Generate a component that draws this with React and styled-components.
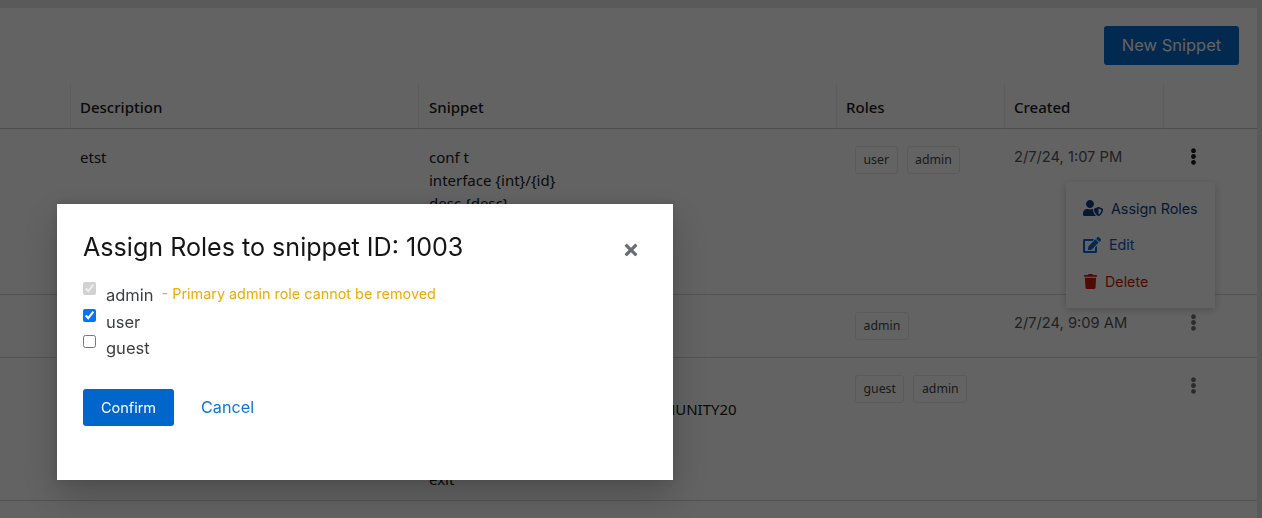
import React from "react";
import styled, { createGlobalStyle } from "styled-components";
import {
  FaEdit,
  FaEllipsisV,
  FaTimes,
  FaTrash,
  FaUserShield,
} from "react-icons/fa";

const snippets = [
  {
    id: 1003,
    description: "etst",
    snippet: ["conf t", "interface {int}/{id}", "desc {desc}", "no shut", "end", "wr"],
    roles: ["user", "admin"],
    created: "2/7/24, 1:07 PM",
    open: true,
  },
  {
    id: 1002,
    description: "show version",
    snippet: ["show version"],
    roles: ["admin"],
    created: "2/7/24, 9:09 AM",
  },
  {
    id: 1001,
    description: "snmp",
    snippet: [
      "conf t",
      "snmp-server community rw COMMUNITY20",
      "no shut",
      "end",
      "exit",
    ],
    roles: ["guest", "admin"],
    created: "",
  },
  {
    id: 1000,
    description: "test",
    snippet: ["conf t"],
    roles: ["guest", "admin"],
    created: "",
  },
];

const roleOptions = [
  { name: "admin", checked: true, disabled: true },
  { name: "user", checked: true },
  { name: "guest", checked: false },
];

const App = () => {
  return (
    <>
      <GlobalStyle />
      <Page>
        <Card>
          <Toolbar>
            <NewButton>New Snippet</NewButton>
          </Toolbar>
          <Table>
            <colgroup>
              <col width="70" />
              <col width="348" />
              <col width="418" />
              <col width="168" />
              <col width="159" />
              <col width="94" />
            </colgroup>
            <thead>
              <tr>
                <Th></Th>
                <Th>Description</Th>
                <SnippetHead>Snippet</SnippetHead>
                <Th>Roles</Th>
                <Th>Created</Th>
                <Th></Th>
              </tr>
            </thead>
            <tbody>
              {snippets.map((item) => {
                return (
                  <tr key={item.id}>
                    <Td></Td>
                    <Td>{item.description}</Td>
                    <SnippetCell>
                      {item.snippet.map((line) => (
                        <div key={line}>{line}</div>
                      ))}
                    </SnippetCell>
                    <RolesCell>
                      <Tags>
                        {item.roles.map((role) => (
                          <Tag key={role}>{role}</Tag>
                        ))}
                      </Tags>
                    </RolesCell>
                    <CreatedCell>{item.created}</CreatedCell>
                    <ActionCell>
                      <Kebab $open={item.open}>
                        <FaEllipsisV />
                      </Kebab>
                      {item.open && (
                        <Menu>
                          <MenuItem $color="#0b3d80">
                            <FaUserShield size={20} />
                            <MenuLabel $gap={8} $color="#0b3d80">
                              Assign Roles
                            </MenuLabel>
                          </MenuItem>
                          <MenuItem $color="#0066cc">
                            <FaEdit size={18} />
                            <MenuLabel $gap={8} $color="#1450b0">
                              Edit
                            </MenuLabel>
                          </MenuItem>
                          <MenuItem $color="#c9190b">
                            <FaTrash size={15} />
                            <MenuLabel $gap={7} $color="#c9190b">
                              Delete
                            </MenuLabel>
                          </MenuItem>
                        </Menu>
                      )}
                    </ActionCell>
                  </tr>
                );
              })}
            </tbody>
          </Table>
        </Card>
      </Page>
      <Backdrop>
        <Modal>
          <ModalHeader>
            <ModalTitle>Assign Roles to snippet ID: 1003</ModalTitle>
            <CloseButton>
              <FaTimes />
            </CloseButton>
          </ModalHeader>
          <RoleList>
            {roleOptions.map((role) => (
              <RoleRow key={role.name}>
                <RoleCheck
                  type="checkbox"
                  defaultChecked={role.checked}
                  disabled={role.disabled}
                />
                <RoleName>{role.name}</RoleName>
                {role.disabled && (
                  <RoleNote>- Primary admin role cannot be removed</RoleNote>
                )}
              </RoleRow>
            ))}
          </RoleList>
          <ModalFooter>
            <ConfirmButton>Confirm</ConfirmButton>
            <CancelButton>Cancel</CancelButton>
          </ModalFooter>
        </Modal>
      </Backdrop>
    </>
  );
};

const GlobalStyle = createGlobalStyle`
  html, body {
    margin: 0;
    height: 100%;
    overflow: hidden;
    background: #e8e8e8;
    font-family: "Inter", "Liberation Sans", sans-serif;
  }
`;

const Page = styled.div`
  height: 100vh;
  box-sizing: border-box;
  padding-top: 8px;
  overflow: hidden;
  background: #e8e8e8;
`;

const Card = styled.div`
  width: 1257px;
  height: 100%;
  background: #fff;
  border-right: 1px solid #e4e4e4;
`;

const Toolbar = styled.div`
  display: flex;
  justify-content: flex-end;
  padding: 18px 18px 18px 0;
`;

const NewButton = styled.button`
  width: 135px;
  height: 39px;
  padding: 0 0 2px;
  border: none;
  border-radius: 3px;
  background: #0066cc;
  color: #fff;
  font-family: inherit;
  font-size: 16.5px;
`;

const Table = styled.table`
  width: 1257px;
  table-layout: fixed;
  border-collapse: separate;
  border-spacing: 0;
  font-family: "Noto Sans", sans-serif;
  font-size: 15px;
  color: #151515;
`;

const Th = styled.th`
  height: 43px;
  box-sizing: content-box;
  padding: 2px 0 0 9px;
  border-bottom: 1px solid #c8c8c8;
  border-left: 1px solid #eee;
  font-weight: 500;
  text-align: left;
  &:first-child {
    border-left: none;
  }
`;

const SnippetHead = styled(Th)`
  padding-left: 10px;
`;

const Td = styled.td`
  padding: 17px 10px 9px;
  border-bottom: 1px solid #d2d2d2;
  vertical-align: top;
  line-height: 23.2px;
`;

const SnippetCell = styled(Td)`
  padding-left: 11px;
  white-space: nowrap;
`;

const RolesCell = styled(Td)`
  padding-left: 19px;
`;

const CreatedCell = styled(Td)`
  color: #4f5255;
  font-family: "Inter", sans-serif;
  font-size: 14.7px;
`;

const ActionCell = styled(Td)`
  position: relative;
  padding: 19px 0 9px 22px;
`;

const Tags = styled.div`
  display: flex;
  gap: 9px;
  margin-bottom: 8px;
`;

const Tag = styled.span`
  height: 26px;
  padding: 0 7.5px;
  display: flex;
  align-items: center;
  border: 1px solid #e6e6e6;
  border-radius: 3px;
  font-size: 12.3px;
  line-height: 1;
  color: #3c3f42;
`;

const Kebab = styled.div`
  display: flex;
  font-size: 17px;
  color: ${(props) => (props.$open ? "#151515" : "#6a6e73")};
  svg {
    display: block;
  }
`;

const Menu = styled.div`
  position: absolute;
  z-index: 2;
  top: 53px;
  right: 42px;
  box-sizing: border-box;
  width: 149px;
  height: 126px;
  padding: 8px 0 0 17px;
  display: flex;
  flex-direction: column;
  background: #fff;
  box-shadow: 0 2px 8px rgba(3, 3, 3, 0.2);
`;

const MenuItem = styled.div`
  height: 36.5px;
  display: flex;
  align-items: center;
  color: ${(props) => props.$color};
`;

const MenuLabel = styled.span`
  margin-left: ${(props) => props.$gap}px;
  color: ${(props) => props.$color};
  font-family: "Inter", sans-serif;
  font-size: 14.3px;
`;

const Backdrop = styled.div`
  position: fixed;
  inset: 0;
  z-index: 10;
  padding: 204px 0 0 57px;
  background: rgba(3, 3, 3, 0.62);
`;

const Modal = styled.div`
  width: 616px;
  height: 276px;
  box-sizing: border-box;
  padding: 26px 33px 0 26px;
  background: #fff;
  box-shadow: 0 16px 32px rgba(3, 3, 3, 0.2), 0 0 8px rgba(3, 3, 3, 0.1);
`;

const ModalHeader = styled.div`
  display: flex;
  justify-content: space-between;
  align-items: center;
`;

const ModalTitle = styled.h1`
  margin: 0;
  font-size: 25.1px;
  font-weight: 400;
  line-height: 34px;
  color: #151515;
`;

const CloseButton = styled.div`
  display: flex;
  margin-top: 6px;
  font-size: 18px;
  color: #6a6e73;
`;

const RoleList = styled.div`
  margin-top: 18px;
  display: flex;
  flex-direction: column;
`;

const RoleRow = styled.label`
  height: 26.5px;
  display: flex;
  align-items: flex-start;
  color: #3c3f42;
`;

const RoleCheck = styled.input`
  width: 13px;
  height: 13px;
  margin: 0 10px 0 0;
`;

const RoleName = styled.span`
  font-size: 16.5px;
  line-height: 26px;
`;

const RoleNote = styled.span`
  margin-left: 8px;
  font-size: 14.4px;
  line-height: 24px;
  color: #f0ab00;
`;

const ModalFooter = styled.div`
  margin-top: 27px;
  display: flex;
  align-items: center;
  gap: 27px;
`;

const ConfirmButton = styled.button`
  width: 91px;
  height: 37px;
  border: none;
  border-radius: 3px;
  background: #0066cc;
  color: #fff;
  font-family: inherit;
  font-size: 14.5px;
`;

const CancelButton = styled.a`
  color: #0f75d8;
  font-size: 16.2px;
`;

export default App;
